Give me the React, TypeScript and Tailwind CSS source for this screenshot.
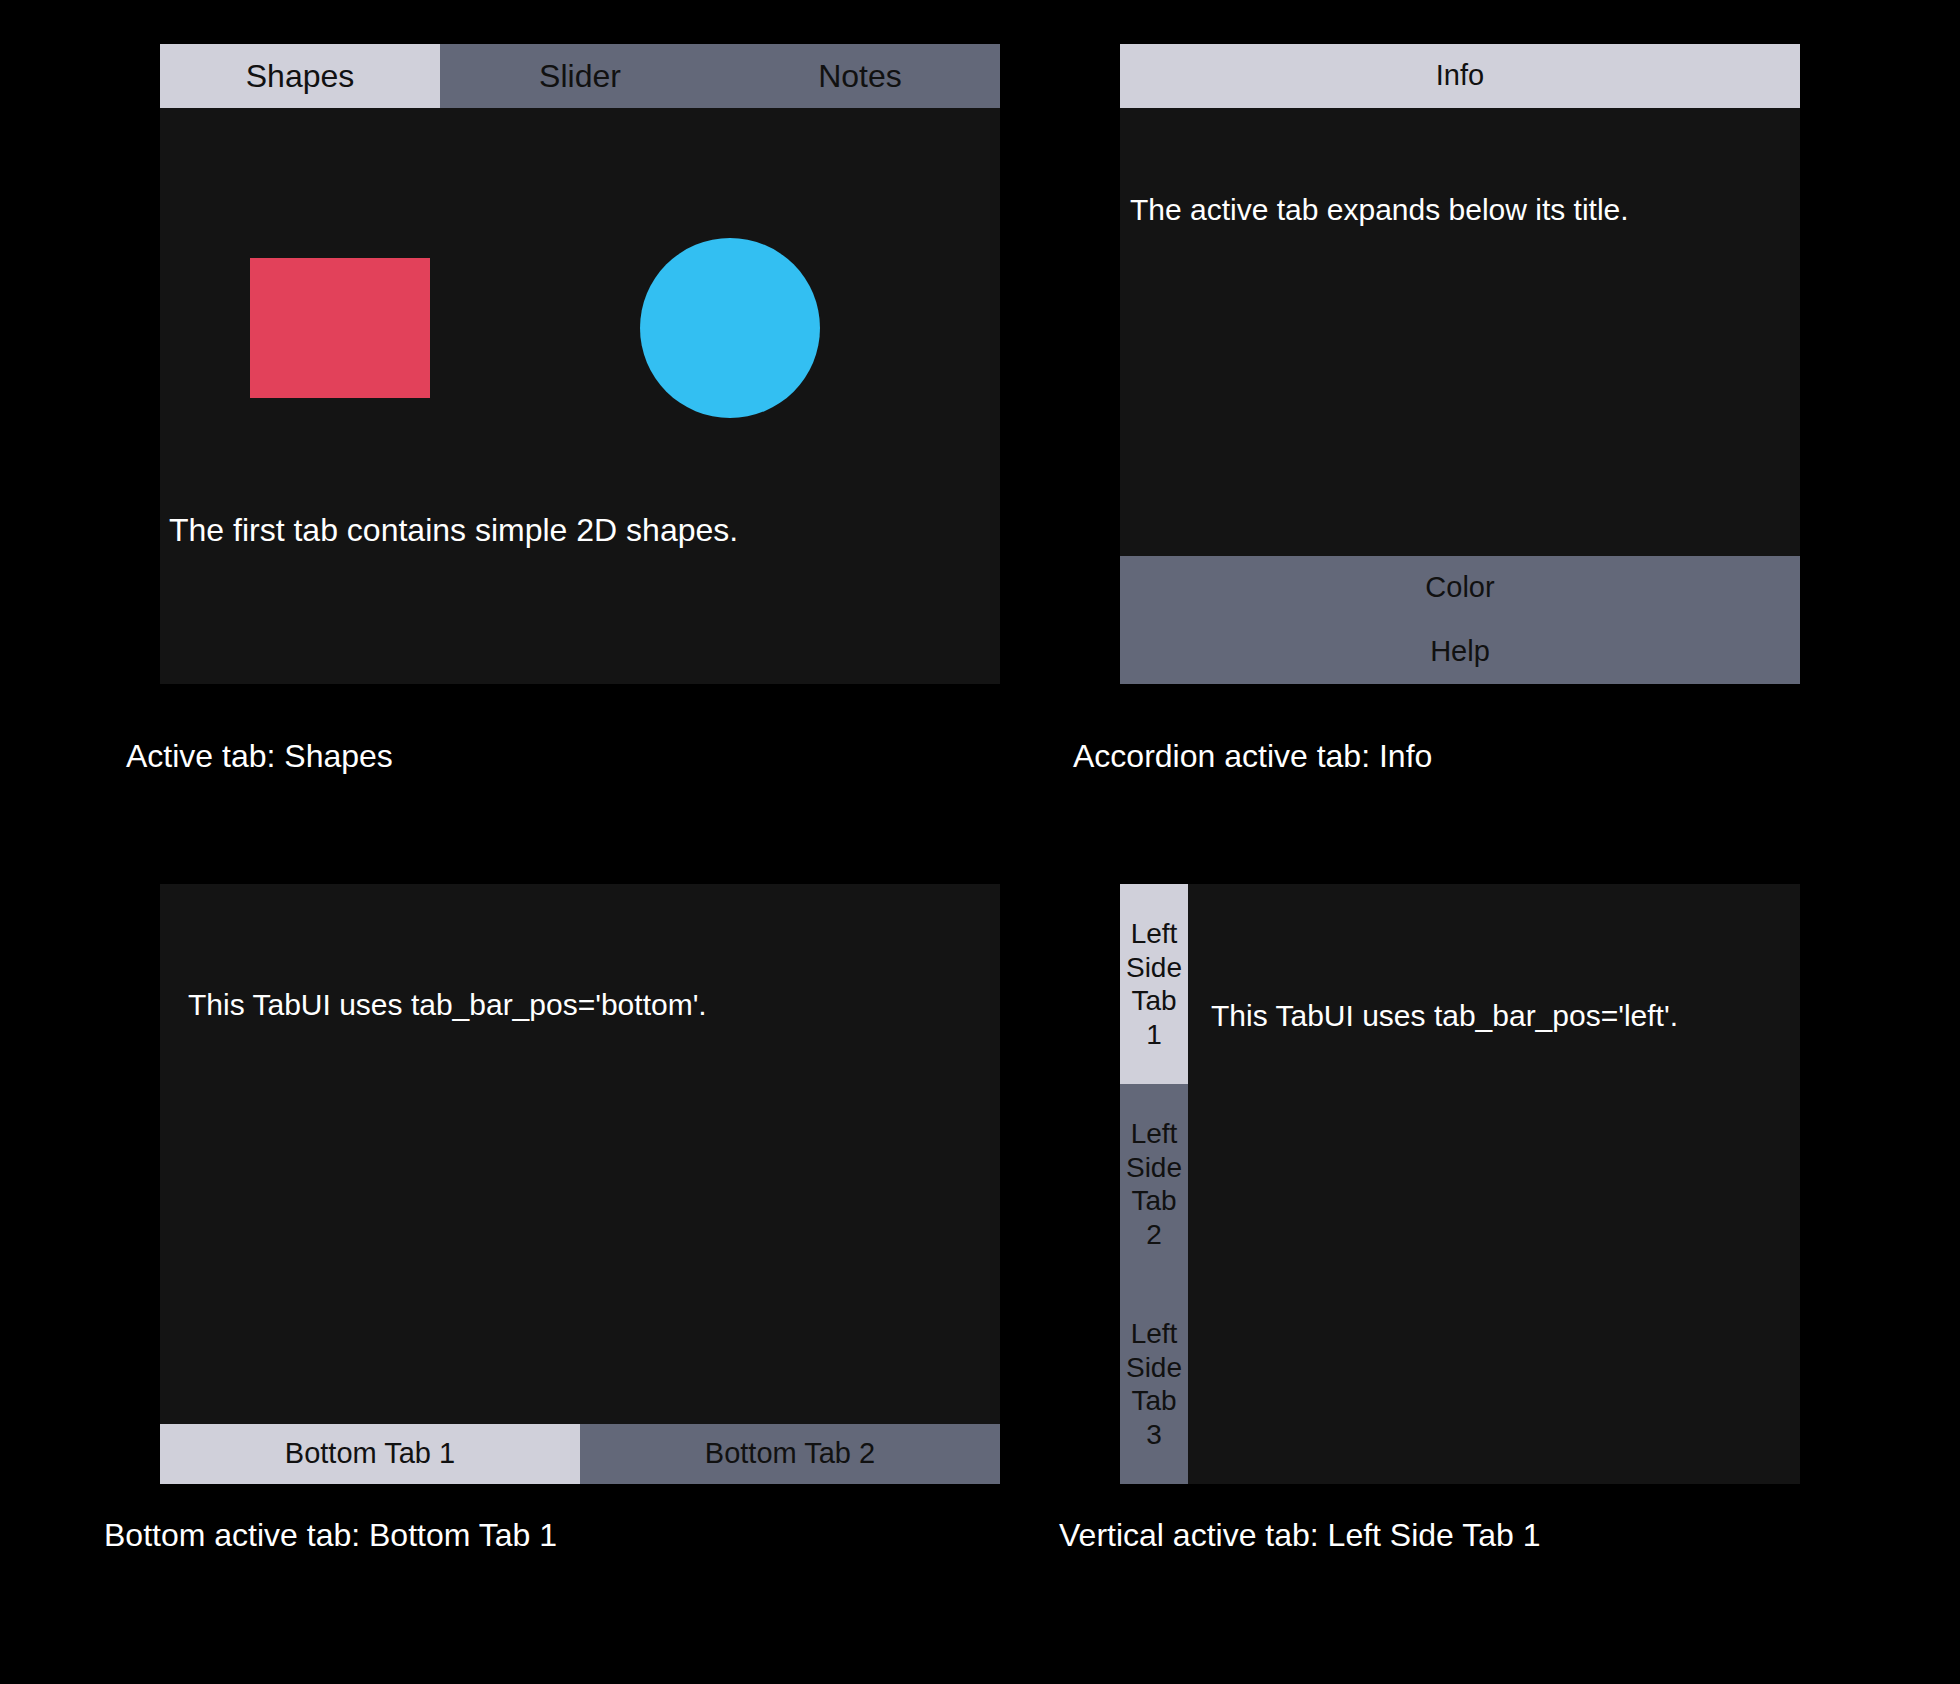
import React from 'react';

const ACTIVE = 'bg-[#d0d0da]';
const IDLE = 'bg-[#636879]';

const TopTab: React.FC<{ label: string; active?: boolean }> = ({ label, active }) => (
    <div className={`flex-1 flex items-center justify-center text-[32px] text-[#111] ${active ? ACTIVE : IDLE}`}>
        {label}
    </div>
);

const ShapesTabs: React.FC = () => (
    <div className="w-[840px] h-[640px] flex flex-col bg-[#141414]">
        <div className="h-[64px] flex">
            <TopTab label="Shapes" active />
            <TopTab label="Slider" />
            <TopTab label="Notes" />
        </div>
        <div className="flex-1 pt-[130px]">
            <div className="flex items-center">
                <div className="ml-[90px] w-[180px] h-[140px] bg-[#e2415a]" />
                <div className="ml-[210px] w-[180px] h-[180px] rounded-full bg-[#33bff2]" />
            </div>
            <p className="mt-[96px] pl-[9px] text-[32px] leading-none">The first tab contains simple 2D shapes.</p>
        </div>
    </div>
);

const AccordionHeader: React.FC<{ label: string; active?: boolean }> = ({ label, active }) => (
    <div className={`h-[64px] flex items-center justify-center text-[29px] text-[#111] ${active ? ACTIVE : IDLE}`}>
        {label}
    </div>
);

const AccordionPanel: React.FC = () => (
    <div className="w-[680px] h-[640px] flex flex-col">
        <AccordionHeader label="Info" active />
        <div className="flex-1 bg-[#141414] pt-[87px] pl-[10px]">
            <p className="text-[30px] leading-none">The active tab expands below its title.</p>
        </div>
        <AccordionHeader label="Color" />
        <AccordionHeader label="Help" />
    </div>
);

const BottomTabs: React.FC = () => (
    <div className="w-[840px] h-[600px] flex flex-col">
        <div className="flex-1 bg-[#141414] pt-[106px] pl-[28px]">
            <p className="text-[30px] leading-none">This TabUI uses tab_bar_pos='bottom'.</p>
        </div>
        <div className="h-[60px] flex text-[29px] text-[#111]">
            <div className={`flex-1 flex items-center justify-center ${ACTIVE}`}>Bottom Tab 1</div>
            <div className={`flex-1 flex items-center justify-center ${IDLE}`}>Bottom Tab 2</div>
        </div>
    </div>
);

const SideTab: React.FC<{ n: number; active?: boolean }> = ({ n, active }) => (
    <div className={`flex-1 flex items-center justify-center text-center text-[28px] leading-[33.5px] text-[#111] ${active ? ACTIVE : IDLE}`}>
        <span>
            Left
            <br />
            Side
            <br />
            Tab
            <br />
            {n}
        </span>
    </div>
);

const SideTabs: React.FC = () => (
    <div className="w-[680px] h-[600px] flex">
        <div className="w-[68px] flex flex-col">
            <SideTab n={1} active />
            <SideTab n={2} />
            <SideTab n={3} />
        </div>
        <div className="flex-1 bg-[#141414] pt-[117px] pl-[23px]">
            <p className="text-[30px] leading-none">This TabUI uses tab_bar_pos='left'.</p>
        </div>
    </div>
);

export default function App() {
    return (
        <div className="w-[1960px] h-[1684px] bg-black text-white font-['Liberation_Sans',Arial,sans-serif]">
            <div className="flex pt-[44px] pl-[160px] gap-[120px]">
                <ShapesTabs />
                <AccordionPanel />
            </div>
            <div className="flex mt-[56px] text-[32px] leading-none">
                <p className="ml-[126px] w-[947px]">Active tab: Shapes</p>
                <p>Accordion active tab: Info</p>
            </div>
            <div className="flex mt-[112px] pl-[160px] gap-[120px]">
                <BottomTabs />
                <SideTabs />
            </div>
            <div className="flex mt-[35px] text-[32px] leading-none">
                <p className="ml-[104px] w-[955px]">Bottom active tab: Bottom Tab 1</p>
                <p>Vertical active tab: Left Side Tab 1</p>
            </div>
        </div>
    );
}
